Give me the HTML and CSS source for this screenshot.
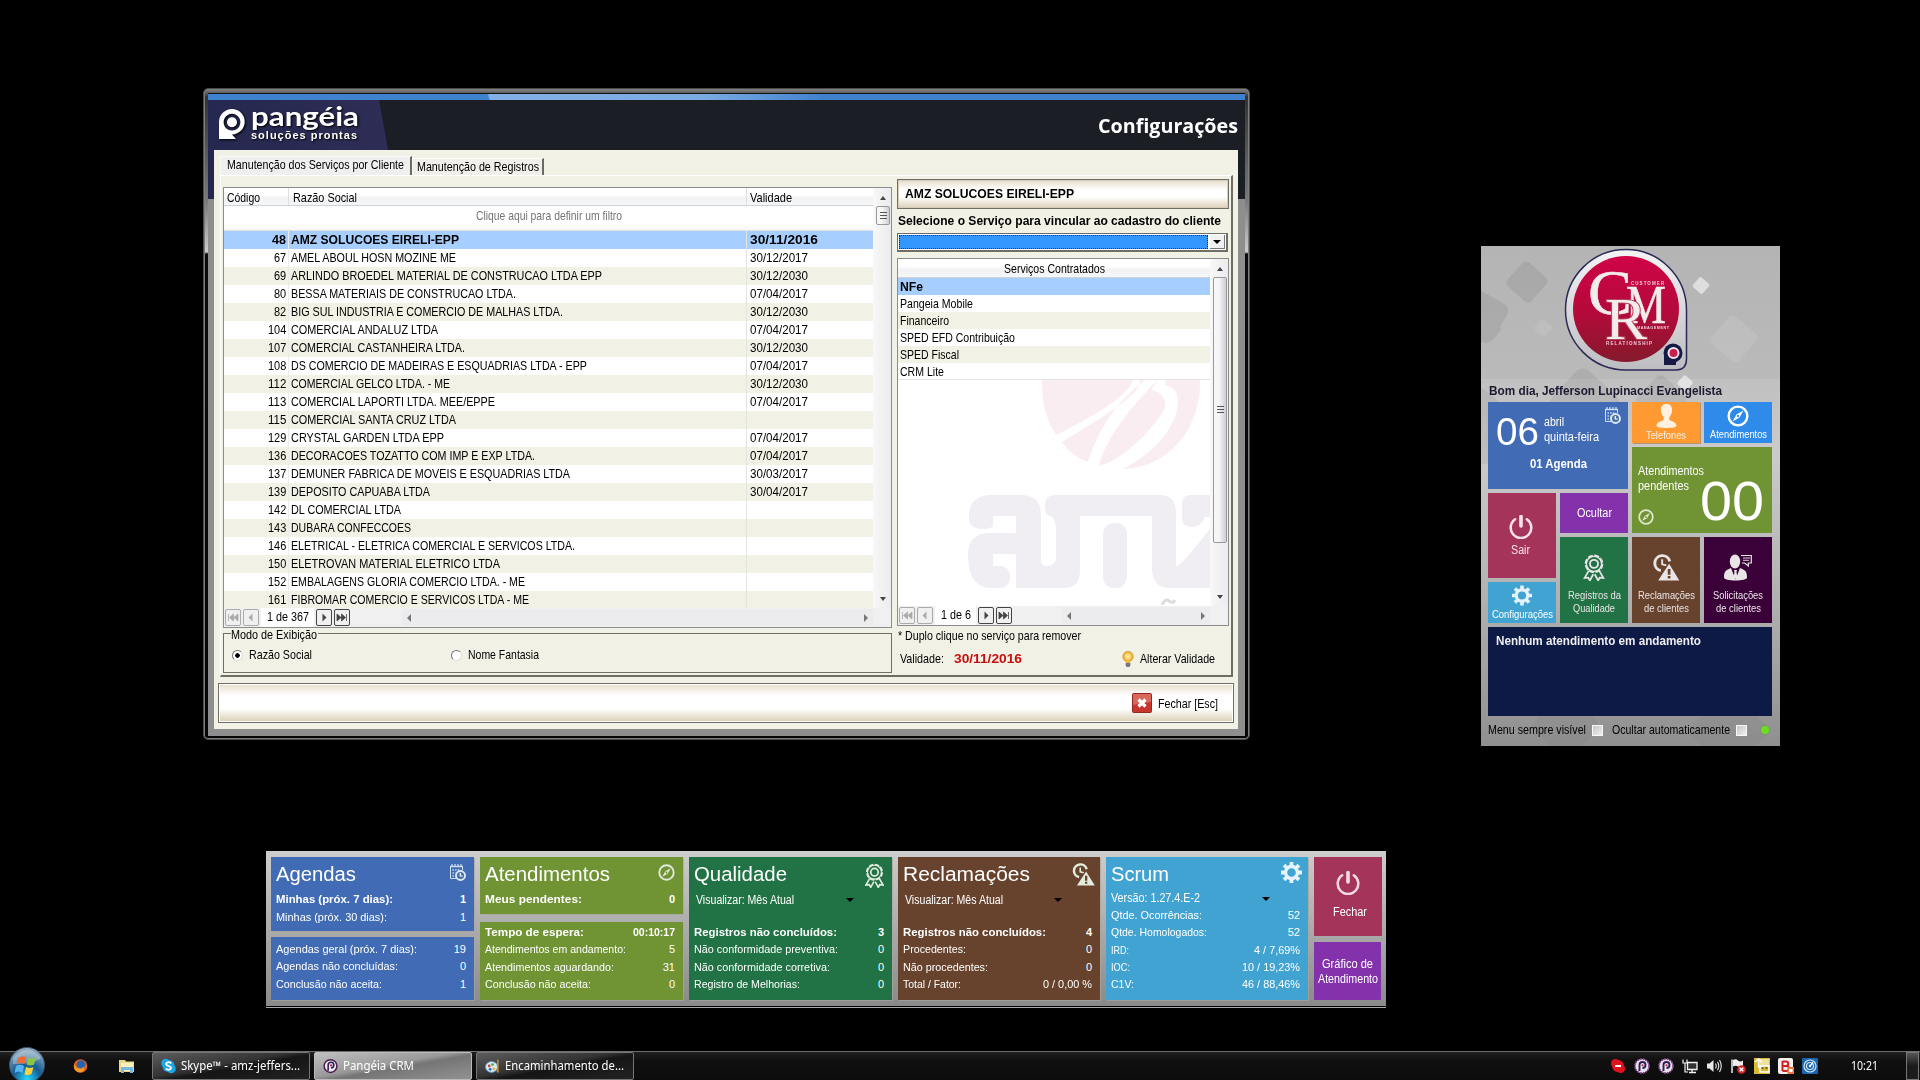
FILE: index.html
```html
<!DOCTYPE html>
<html lang="pt-BR">
<head>
<meta charset="utf-8">
<title>Pangéia CRM</title>
<link rel="stylesheet" href="styles.css">
</head>
<body>
<svg class="defs" aria-hidden="true">
  <defs>
    <symbol id="i-calendar" viewBox="0 0 17 17">
      <path d="M1 2.500h13" stroke="#cfe0f2" stroke-width="1.400"/><path d="M3 0v3M6 0v3M9 0v3M12 0v3" stroke="#cfe0f2" stroke-width="1.2"/>
      <path d="M1.500 3v11.500H7M13.500 3v3" fill="none" stroke="#cfe0f2"/>
      <path d="M3.500 6h8M3.500 9h3M3.500 12h3" stroke="#cfe0f2" stroke-width="1.500" stroke-dasharray="1.400 1.200"/>
      <circle cx="11.500" cy="11.500" r="4.500" fill="#4a6fa0" stroke="#dceaf8" stroke-width="1.900"/><path d="M11.300 9v3h2.400" fill="none" stroke="#fff" stroke-width="1.200"/>
    </symbol>
    <symbol id="i-compass" viewBox="0 0 24 24">
      <circle cx="12" cy="12" r="10.2" fill="none" stroke="currentColor" stroke-width="2.6"/>
      <path fill="currentColor" fill-rule="evenodd" d="M18 6l-4.3 7.7L6 18l4.3-7.7zM12 10.700a1.300 1.300 0 1 0 .01 0z"/>
    </symbol>
    <symbol id="i-power" viewBox="0 0 24 24">
      <path d="M6.200 4.200a10.300 10.300 0 1 0 11.600 0" fill="none" stroke="currentColor" stroke-width="2.500" stroke-linecap="round"/>
      <path d="M12 1.500v9.500" stroke="currentColor" stroke-width="3.600" stroke-linecap="round"/>
    </symbol>
    <symbol id="i-gear" viewBox="0 0 20 20">
      <path fill="none" stroke="currentColor" stroke-width="3.600" d="M10 0v4M10 16v4M0 10h4M16 10h4M2.900 2.900l2.900 2.900M14.200 14.200l2.900 2.900M17.100 2.900l-2.900 2.900M5.800 14.200l-2.900 2.900"/>
      <circle cx="10" cy="10" r="5.700" fill="none" stroke="currentColor" stroke-width="3.200"/>
    </symbol>
    <symbol id="i-ribbon" viewBox="0 0 20 26">
      <path d="M5 16l-4 7 3.500-.3L6 25.500l3.300-6M15 16l4 7-3.500-.3-1.500 2.800-3.300-6" fill="none" stroke="currentColor" stroke-width="1.700"/>
      <circle cx="10" cy="9.500" r="8" fill="none" stroke="currentColor" stroke-width="2" stroke-dasharray="4.800 1.480"/>
      <circle cx="10" cy="9.500" r="7.300" fill="none" stroke="currentColor" stroke-width="1.200"/>
      <circle cx="10" cy="9.500" r="3.900" fill="none" stroke="currentColor" stroke-width="1.800"/>
    </symbol>
    <symbol id="i-alert" viewBox="0 0 26 26">
      <path d="M8 16a7.300 7.300 0 1 1 8.600-9" fill="none" stroke="currentColor" stroke-width="2.800"/>
      <path d="M9.300 5v5l4 1" fill="none" stroke="currentColor" stroke-width="1.800"/>
      <path fill="currentColor" fill-rule="evenodd" d="M16 9.500L25.800 25.500H5.500zM14.700 14.500v5.500h2.600v-5.500zm0 6.700v2.300h2.600v-2.300z"/>
    </symbol>
    <symbol id="i-person" viewBox="0 0 20 24">
      <path fill="currentColor" d="M10 0c4 0 5.600 2.600 5.600 6 0 3-1.300 5.500-2.800 7v2.300c0 2 7.200 2 7.200 6.500 0 1.500-4 2.200-10 2.200S0 23.300 0 21.800c0-4.500 7.200-4.500 7.200-6.500V13c-1.500-1.500-2.800-4-2.800-7 0-3.400 1.600-6 5.600-6z"/>
    </symbol>
    <symbol id="i-talk" viewBox="0 0 28 27">
      <ellipse cx="11" cy="7.500" rx="5.200" ry="7" fill="currentColor"/>
      <path fill="currentColor" d="M7 14l4.500 11.500L16 14c5 2 7 3 7 9.500 0 2-5 3-11.500 3S0 25.500 0 23.500C0 17 2 16 7 14zM10 16h3l-.5 2 .7 4-1.700 3-1.700-3 .7-4z"/>
      <path d="M17 1.500h10.300v7.500h-3v3l-3.600-3H18" fill="none" stroke="currentColor" stroke-width="1.200"/><path d="M19 4h7M19 6.300h6" stroke="currentColor" stroke-width=".9"/>
    </symbol>
    <symbol id="i-first" viewBox="0 0 16 17"><rect x=".5" y=".5" width="15" height="16" rx="1.500" fill="none" stroke="currentColor"/><path d="M3.500 5v7M8.500 5v7L4.500 8.500zM13 5v7L9 8.500z" fill="currentColor" stroke="currentColor" stroke-width=".8"/></symbol>
    <symbol id="i-prev" viewBox="0 0 16 17"><rect x=".5" y=".5" width="15" height="16" rx="1.500" fill="none" stroke="currentColor"/><path d="M9.500 4.500v8l-4-4z" fill="currentColor"/></symbol>
    <symbol id="i-pang" viewBox="0 0 26 32"><path fill="currentColor" fill-rule="evenodd" d="M13 0a12.700 12.700 0 0 1 12.700 12.700C25.700 19.500 20.500 25 13 25.500L17 30H0V13A13 13 0 0 1 13 0zM13 4.800a8.400 8.400 0 1 0 .01 0z"/><circle cx="13" cy="13.200" r="5" fill="currentColor"/></symbol>
    <linearGradient id="g-red" x1="0" y1="0" x2="0" y2="1"><stop offset="0" stop-color="#cf0347"/><stop offset=".55" stop-color="#b30a3a"/><stop offset="1" stop-color="#841a2c"/></linearGradient>
    <linearGradient id="g-silver" x1="0" y1="0" x2="0" y2="1"><stop offset="0" stop-color="#f4f4f6"/><stop offset="1" stop-color="#bdbdc1"/></linearGradient>
    <radialGradient id="g-orb" cx=".5" cy=".9" r=".9"><stop offset="0" stop-color="#25d6ff"/><stop offset=".45" stop-color="#135b92"/><stop offset="1" stop-color="#9fb4c5"/></radialGradient>
    <radialGradient id="g-bulb"><stop offset="0" stop-color="#fff6b0"/><stop offset="1" stop-color="#efa921"/></radialGradient>
  </defs>
</svg>

<main class="desktop">

  <section class="win">
    <div class="win-strip"></div>
    <header class="win-head">
      <div class="brand">
        <svg class="brand-mark"><use href="#i-pang"/></svg>
        <div class="brand-text"><span class="brand-name" data-w="108">pangéia</span><span class="brand-sub" data-w="107">soluções prontas</span></div>
      </div>
      <h1 data-w="140">Configurações</h1>
    </header>
    <div class="win-body">
      <div class="tabs">
        <div class="tab on"><span data-w="177">Manutenção dos Serviços por Cliente</span></div>
        <div class="tab"><span data-w="122">Manutenção de Registros</span></div>
      </div>
      <div class="page">
        <div class="left">
          <div class="grid">
            <div class="grid-main">
              <div class="grid-data">
                <div class="ghead"><span class="c1"><span data-w="33">Código</span></span><span class="c2"><span data-w="64">Razão Social</span></span><span class="c3"><span data-w="42">Validade</span></span></div>
                <div class="gfilter"><span data-w="146">Clique aqui para definir um filtro</span></div>
                <div class="grows" id="clients"></div>
              </div>
              <div class="vbar"><i class="up"></i><b class="thumb t1"></b><i class="down"></i></div>
            </div>
            <div class="nav">
              <svg class="off"><use href="#i-first"/></svg><svg class="off"><use href="#i-prev"/></svg>
              <span class="count c367"><span data-w="42">1 de 367</span></span>
              <svg class="flip"><use href="#i-prev"/></svg><svg class="flip"><use href="#i-first"/></svg>
              <div class="hbar h1"><i class="lf"></i><i class="rt"></i></div>
            </div>
          </div>
          <div class="group">
            <span class="legend"><span data-w="86">Modo de Exibição</span></span>
            <div class="radios"><label><i class="radio on"></i><span data-w="63">Razão Social</span></label><label><i class="radio"></i><span data-w="71">Nome Fantasia</span></label></div>
          </div>
        </div>
        <div class="right">
          <div class="cname"><span data-w="169">AMZ SOLUCOES EIRELI-EPP</span></div>
          <div class="clabel"><span data-w="323">Selecione o Serviço para vincular ao cadastro do cliente</span></div>
          <div class="combo"><div class="sel"></div><div class="drop"><i></i></div></div>
          <div class="grid services">
            <div class="grid-main">
              <div class="grid-data">
                <div class="shead"><span data-w="101">Serviços Contratados</span></div>
                <div class="srow sel"><span data-w="23">NFe</span></div>
                <div class="srow"><span data-w="73">Pangeia Mobile</span></div>
                <div class="srow odd"><span data-w="49">Financeiro</span></div>
                <div class="srow"><span data-w="115">SPED EFD Contribuição</span></div>
                <div class="srow odd"><span data-w="59">SPED Fiscal</span></div>
                <div class="srow last"><span data-w="44">CRM Lite</span></div>
                <svg class="mark" viewBox="0 0 313 225">
                  <g fill="#f9edf1">
                    <path d="M144 0H235C230 16 196 36 158 55C148 40 143 20 144 0z"/>
                    <path d="M242 0C244 14 206 36 164 62C171 72 181 79 190 82C198 56 213 26 247 0z"/>
                    <path d="M260 0C238 20 206 60 201 86C228 80 262 40 267 28C269 18 262 11 253 10z"/>
                    <path d="M268 0H302C303 48 272 87 225 89C258 72 279 46 280 22C280 12 276 7 267 5z"/>
                  </g>
                  <g fill="#f0eef2">
                    <path d="M91 115H123Q143 115 143 135V180Q143 186 149 186T158 180V150Q158 136 149 135Q147 134 147 125Q147 115 157 115H262Q278 115 278 133V186Q284 186 313 147V208H272Q254 208 254 188V136H182V190Q182 208 166 208H118V174H95V186H103Q112 187 112 197T103 208H93Q70 208 70 174Q70 153 92 153H118V136H95V146Q93 149 86 149Q71 149 71 139Q70 116 91 115z"/>
                    <rect x="205" y="143" width="24" height="65" rx="11"/>
                    <path d="M313 115H291Q284 116 284 124V140Q285 147 294 147T307 137H313z"/>
                    <path d="M264 225q3-7 7-4t6-1" stroke="#dedbe0" stroke-width="3" fill="none"/>
                  </g>
                </svg>
              </div>
              <div class="vbar"><i class="up"></i><b class="thumb t2"></b><i class="down"></i></div>
            </div>
            <div class="nav">
              <svg class="off"><use href="#i-first"/></svg><svg class="off"><use href="#i-prev"/></svg>
              <span class="count"><span data-w="30">1 de 6</span></span>
              <svg class="flip"><use href="#i-prev"/></svg><svg class="flip"><use href="#i-first"/></svg>
              <div class="hbar h2"><i class="lf"></i><i class="rt"></i></div>
            </div>
          </div>
          <div class="note"><span data-w="183">* Duplo clique no serviço para remover</span></div>
          <div class="valid">
            <span data-w="44">Validade:</span><strong data-w="68">30/11/2016</strong>
            <svg class="bulb" viewBox="0 0 12 17"><circle cx="6" cy="5.500" r="5.200" fill="url(#g-bulb)" stroke="#c58a2b" stroke-width=".6"/><path d="M3.500 9.500h5l-.6 2.500H4.100z" fill="#f2b536"/><path d="M3.700 12h4.600v2.500L7.300 16H4.700l-1-1.500z" fill="#73777e"/></svg>
            <span data-w="75">Alterar Validade</span>
          </div>
        </div>
      </div>
      <footer class="bar">
        <svg class="xbtn" viewBox="0 0 20 20"><rect x=".5" y=".5" width="19" height="19" rx="1" fill="#c8372f" stroke="#8d2a22"/><path d="M1 1h18v8Q10 10 1 12z" fill="#df7c6f" opacity=".7"/><path d="M6.500 6.500l7 7M13.500 6.500l-7 7" stroke="#fff" stroke-width="3.200"/></svg>
        <span data-w="60">Fechar [Esc]</span>
      </footer>
    </div>
  </section>

  <section class="crm">
    <svg class="crm-bg" viewBox="0 0 299 500">
      <g fill="#000" opacity=".07">
        <rect x="-22" y="48" width="44" height="44" rx="8" transform="rotate(30 0 70)"/><rect x="30" y="20" width="32" height="32" rx="5" transform="rotate(42 46 36)"/>
        <rect x="5" y="77" width="13" height="13" rx="2" transform="rotate(40 11 84)"/><rect x="75" y="130" width="56" height="56" rx="10" transform="rotate(42 103 158)"/>
        <rect x="160" y="135" width="40" height="40" rx="7" transform="rotate(45 180 155)"/><rect x="-30" y="150" width="60" height="60" rx="10" transform="rotate(40 0 180)"/>
      </g>
      <g fill="#000" opacity=".03"><rect x="218" y="455" width="60" height="60" rx="8" transform="rotate(45 248 485)"/><rect x="60" y="455" width="50" height="50" rx="8" transform="rotate(45 85 480)"/></g>
      <g fill="#fff" opacity=".09"><rect x="235" y="75" width="36" height="36" rx="5" transform="rotate(40 253 93)"/><rect x="55" y="75" width="14" height="14" rx="3" transform="rotate(40 62 82)"/><rect x="0" y="133" width="299" height="367"/></g>
      <g fill="#fff" opacity=".55"><rect x="213.500" y="33" width="13" height="13" rx="2" transform="rotate(42 220 39.500)"/><rect x="198" y="131" width="12" height="12" rx="2" transform="rotate(42 204 137)"/></g>
      <path d="M145 3.500A60.500 60.500 0 0 1 205.500 64V113Q205.500 124 195 124H145A60.500 60.250 0 0 1 145 3.500z" fill="url(#g-silver)" stroke="#2b2a56" stroke-width="1.500"/>
      <circle cx="145" cy="63" r="53" fill="url(#g-red)"/>
      <g fill="#f3ecec" font-family="Liberation Serif, serif" stroke="#f3ecec" stroke-width=".5">
        <text x="107" y="68" font-size="64" textLength="44" lengthAdjust="spacingAndGlyphs">C</text>
        <text x="145" y="77" font-size="54" textLength="40" lengthAdjust="spacingAndGlyphs">M</text>
        <text x="124" y="93" font-size="60" textLength="42" lengthAdjust="spacingAndGlyphs" stroke="#b9465c" stroke-width="2" paint-order="stroke">R</text>
      </g>
      <g fill="#f1cdd6" font-family="Liberation Sans, sans-serif" font-weight="bold"><text x="150" y="38.500" font-size="4.500" textLength="33">CUSTOMER</text><text x="156" y="83" font-size="3.800" textLength="32">MANAGEMENT</text><text x="125" y="99" font-size="4.500" textLength="46">RELATIONSHIP</text></g>
      <circle cx="192" cy="107" r="9.500" fill="#161a44"/><path d="M183 107v12h12v-4z" fill="#161a44"/><circle cx="192.500" cy="107" r="5" fill="#c9204f" stroke="#efe9ee" stroke-width="2"/>
    </svg>
    <div class="hello"><span data-w="233">Bom dia, Jefferson Lupinacci Evangelista</span></div>
    <div class="tiles">
      <div class="tile agenda"><div class="day"><span class="num" data-w="43">06</span><div class="month"><span data-w="20">abril</span><span data-w="55">quinta-feira</span></div><svg class="cal"><use href="#i-calendar"/></svg></div><strong><span data-w="57">01 Agenda</span></strong></div>
      <div class="tile tel"><svg><use href="#i-person"/></svg><span data-w="40">Telefones</span></div>
      <div class="tile ate"><svg><use href="#i-compass"/></svg><span data-w="57">Atendimentos</span></div>
      <div class="tile pend"><div class="ptext"><span data-w="66">Atendimentos</span><span data-w="51">pendentes</span><svg><use href="#i-compass"/></svg></div><span class="zero" data-w="64">00</span></div>
      <div class="tile sair"><svg><use href="#i-power"/></svg><span data-w="19">Sair</span></div>
      <div class="tile ocul"><span data-w="35">Ocultar</span></div>
      <div class="tile reg tall"><svg><use href="#i-ribbon"/></svg><span data-w="53">Registros da</span><span data-w="42">Qualidade</span></div>
      <div class="tile rec tall"><svg><use href="#i-alert"/></svg><span data-w="57">Reclamações</span><span data-w="45">de clientes</span></div>
      <div class="tile sol tall"><svg><use href="#i-talk"/></svg><span data-w="50">Solicitações</span><span data-w="45">de clientes</span></div>
      <div class="tile conf"><svg><use href="#i-gear"/></svg><span data-w="61">Configurações</span></div>
    </div>
    <div class="status"><span data-w="205">Nenhum atendimento em andamento</span></div>
    <div class="opts"><span data-w="98">Menu sempre visível</span><i class="chk"></i><span class="auto" data-w="118">Ocultar automaticamente</span><i class="chk"></i><i class="led"></i></div>
  </section>

  <section class="dash">
    <div class="dcol">
      <div class="card blue c74"><div class="dt"><span data-w="80">Agendas</span><svg class="cal"><use href="#i-calendar"/></svg></div>
        <p class="b"><span data-w="117">Minhas (próx. 7 dias):</span><span>1</span></p><p><span data-w="111">Minhas (próx. 30 dias):</span><span>1</span></p></div>
      <div class="card blue low c63"><p><span data-w="141">Agendas geral (próx. 7 dias):</span><span>19</span></p><p><span data-w="122">Agendas não concluídas:</span><span>0</span></p><p><span data-w="106">Conclusão não aceita:</span><span>1</span></p></div>
    </div>
    <div class="dcol">
      <div class="card green c57"><div class="dt"><span data-w="125">Atendimentos</span><svg class="cmp"><use href="#i-compass"/></svg></div><p class="b"><span data-w="97">Meus pendentes:</span><span>0</span></p></div>
      <div class="card green low2 c78"><p class="b"><span data-w="99">Tempo de espera:</span><span data-w="42">00:10:17</span></p><p><span data-w="141">Atendimentos em andamento:</span><span>5</span></p><p><span data-w="129">Atendimentos aguardando:</span><span>31</span></p><p><span data-w="106">Conclusão não aceita:</span><span>0</span></p></div>
    </div>
    <div class="dcol">
      <div class="card dgreen full"><div class="dt"><span data-w="93">Qualidade</span><svg class="rib"><use href="#i-ribbon"/></svg></div><div class="pick"><span data-w="98">Visualizar: Mês Atual</span><i></i></div>
        <p class="b"><span data-w="143">Registros não concluídos:</span><span>3</span></p><p><span data-w="144">Não conformidade preventiva:</span><span>0</span></p><p><span data-w="136">Não conformidade corretiva:</span><span>0</span></p><p><span data-w="106">Registro de Melhorias:</span><span>0</span></p></div>
    </div>
    <div class="dcol">
      <div class="card brown full"><div class="dt"><span data-w="127">Reclamações</span><svg class="alr"><use href="#i-alert"/></svg></div><div class="pick"><span data-w="98">Visualizar: Mês Atual</span><i></i></div>
        <p class="b"><span data-w="143">Registros não concluídos:</span><span>4</span></p><p><span data-w="63">Procedentes:</span><span>0</span></p><p><span data-w="85">Não procedentes:</span><span>0</span></p><p><span data-w="58">Total / Fator:</span><span data-w="49">0 / 0,00 %</span></p></div>
    </div>
    <div class="dcol">
      <div class="card sky full"><div class="dt"><span data-w="58">Scrum</span><svg class="ger"><use href="#i-gear"/></svg></div><div class="pick"><span data-w="89">Versão: 1.27.4.E-2</span><i></i></div>
        <p><span data-w="91">Qtde. Ocorrências:</span><span>52</span></p><p><span data-w="96">Qtde. Homologados:</span><span>52</span></p><p><span data-w="18">IRD:</span><span data-w="46">4 / 7,69%</span></p><p><span data-w="19">IOC:</span><span data-w="58">10 / 19,23%</span></p><p><span data-w="23">C1V:</span><span data-w="58">46 / 88,46%</span></p></div>
    </div>
    <div class="dcol narrow">
      <div class="btn close"><svg><use href="#i-power"/></svg><span data-w="34">Fechar</span></div>
      <div class="btn chart"><span data-w="51">Gráfico de</span><span data-w="60">Atendimento</span></div>
    </div>
  </section>
</main>

<nav class="taskbar">
  <svg class="orb" viewBox="0 0 38 38"><circle cx="19" cy="19" r="17.500" fill="url(#g-orb)" stroke="#3b5266"/><path d="M5 12Q19-4 33 12Q26 18 5 18z" fill="#fff" opacity=".3"/><path d="M10 12q4-3 8-1l-1.500 7q-4-2-8 0z" fill="#ec6b35"/><path d="M20 12q4 2 8-1l-2 7.500q-3 2-7.500 0z" fill="#8dc63f"/><path d="M8 20q4-2.500 8 0l-1.500 7q-4-3-8 0z" fill="#58b4ee"/><path d="M18 21q4 2 7.500 0l-2 7q-3 2-7 .5z" fill="#fbcf3a"/></svg>
  <svg class="q1" viewBox="0 0 16 16"><circle cx="8" cy="8" r="7.300" fill="#e8641b"/><circle cx="8.500" cy="6.500" r="4.700" fill="#2a63ad"/><path d="M1 5q1 5 6 5.500 4 .5 4-2.500 2 4-1 6-6 2-8.500-3z" fill="#f79a24"/></svg>
  <svg class="q2" viewBox="0 0 17 16"><path d="M1 2h6l1 1.500h8V14H1z" fill="#ead98c"/><path d="M3 5h12v8H3z" fill="#f9f0b8"/><path d="M3 9h12v6h-3v-3H6v3H3z" fill="#74b9e3"/></svg>
  <div class="task t-first"><svg viewBox="0 0 16 16"><circle cx="5" cy="5" r="4.700" fill="#1ba8ea"/><circle cx="11" cy="11" r="4.700" fill="#1ba8ea"/><circle cx="8" cy="8" r="6.500" fill="#1ba8ea"/><path d="M11 5Q8 3 6 4.800T8 8t2 3.200T5 11" fill="none" stroke="#fff" stroke-width="1.900"/></svg><span data-w="119">Skype™ - amz-jeffers...</span></div>
  <div class="task active"><svg viewBox="0 0 16 16"><circle cx="8" cy="8" r="6.800" fill="#f0e8f2" stroke="#4a1d50" stroke-width="1.600"/><path d="M5.500 13V7a3 3 0 1 1 3 3" fill="none" stroke="#2d1f55" stroke-width="1.700"/><circle cx="8.500" cy="7.200" r="1.200" fill="#c02045"/></svg><span data-w="71">Pangéia CRM</span></div>
  <div class="task"><svg viewBox="0 0 16 16"><ellipse cx="7" cy="9" rx="6.500" ry="5.800" fill="#d8ecf6" stroke="#5b97b8"/><circle cx="4.500" cy="8" r="1.500" fill="#d9452f"/><circle cx="8" cy="6.500" r="1.500" fill="#58a83c"/><circle cx="5.500" cy="11.500" r="1.500" fill="#2f66c8"/><circle cx="9.500" cy="11" r="1.500" fill="#e8b22a"/><path d="M13 1l1.500 0v14h-2z" fill="#d18a32"/></svg><span data-w="119">Encaminhamento de...</span></div>
  <div class="tray">
    <svg viewBox="0 0 16 16"><circle cx="5.500" cy="5.500" r="4.500" fill="#e0131f"/><circle cx="10.500" cy="10.500" r="4.500" fill="#e0131f"/><circle cx="8" cy="8" r="6" fill="#e0131f"/><path d="M5 8h6" stroke="#fff" stroke-width="2"/></svg>
    <svg viewBox="0 0 16 16"><circle cx="8" cy="8" r="7" fill="#e9e1ee" stroke="#8d4a94" stroke-width="1.800" stroke-dasharray="1.600 1.200"/><path d="M5.500 13V7a3 3 0 1 1 3 3" fill="none" stroke="#2d1f55" stroke-width="1.900"/><circle cx="8.500" cy="7.200" r="1" fill="#c02045"/></svg>
    <svg viewBox="0 0 16 16"><circle cx="8" cy="8" r="7" fill="#e9e1ee" stroke="#8d4a94" stroke-width="1.800" stroke-dasharray="1.600 1.200"/><path d="M5.500 13V7a3 3 0 1 1 3 3" fill="none" stroke="#2d1f55" stroke-width="1.900"/><circle cx="8.500" cy="7.200" r="1" fill="#c02045"/></svg>
    <svg viewBox="0 0 16 16"><path d="M5.500 4.500h9.500v7H5.500zM10 12v2.500M7 14.500h7" fill="#333" stroke="#f4f4f4" stroke-width="1.300"/><path d="M1 1.500v3.500h4V1.500M3 5v9h3" fill="none" stroke="#f4f4f4" stroke-width="1.200"/></svg>
    <svg viewBox="0 0 16 16"><path d="M1 5.500h2.500L7.500 2v12l-4-3.500H1z" fill="#e8e8e8"/><path d="M9.500 5.500q1.500 2.500 0 5M11.500 3.800q2.500 4.200 0 8.400M13.500 2q3.500 6 0 12" fill="none" stroke="#e8e8e8" stroke-width="1.100"/></svg>
    <svg viewBox="0 0 16 16"><path d="M2 1.500V15" stroke="#eee" stroke-width="1.500"/><path d="M3 2q3-1.500 5 .5t5 0v6q-3 1.500-5 0t-5 0z" fill="#eee"/><circle cx="11.500" cy="11.500" r="4.300" fill="#d8252c"/><path d="M9.700 9.700l3.600 3.600M13.300 9.700l-3.600 3.600" stroke="#fff" stroke-width="1.400"/></svg>
    <svg viewBox="0 0 16 16"><path d="M0 0h16v16H0z" fill="#d9b936"/><path d="M5 1h10v7H5z" fill="#efe197"/><path d="M1 4l3.500-3L8 4M4.500 1v8h4M6 8h9v6H6z" fill="none" stroke="#fff" stroke-width="1.400"/><path d="M7.500 10h2M11.500 10h2" stroke="#5b4a13" stroke-width="1.500"/></svg>
    <svg viewBox="0 0 16 16"><rect width="15" height="16" rx="2" fill="#f5f1ef"/><path d="M4.500 3v10M4.500 3.500H8a2.200 2.200 0 0 1 0 4.500H4.500H8.500a2.500 2.500 0 0 1 0 5h-4" fill="none" stroke="#d21f26" stroke-width="2"/><path d="M9.500 9h6.500v7H9.500z" fill="#ec7b3a"/><path d="M11 11h3.500v3H11z" fill="#fff"/></svg>
    <svg viewBox="0 0 16 16"><rect width="16" height="16" rx="1" fill="#1b64ae"/><circle cx="8" cy="8" r="6" fill="none" stroke="#cfe6f7" stroke-width="1.200"/><circle cx="8" cy="8" r="3.500" fill="none" stroke="#cfe6f7" stroke-width="1.200"/><circle cx="8" cy="8" r="1.200" fill="#fff"/><path d="M8 8l3-3.500" stroke="#fff" stroke-width="1.300"/></svg>
  </div>
  <span class="clock" data-w="27">10:21</span>
  <div class="peek"></div>
</nav>
<script src="app.js"></script>
</body>
</html>
```
FILE: styles.css
```css
* { box-sizing: border-box; }
body { margin: 0; width: 1920px; height: 1080px; overflow: hidden; background: #000; display: flex; flex-direction: column; font: 13px/16px "Liberation Sans", sans-serif; color: #000; }
[data-w] { display: inline-block; white-space: pre; text-align: left; transform-origin: 0 50%; flex: none; }
svg { display: block; flex: none; }
i { display: block; }
p, h1 { margin: 0; }
.defs { position: absolute; width: 0; height: 0; }
.desktop { position: relative; height: 1051px; flex: none; }

/* Settings window */
.win { position: absolute; left: 203px; top: 88px; width: 1047px; height: 652px; padding: 4px; border: 1px solid #4c4c4c; border-radius: 5px; background: linear-gradient(#888 0, #333 8px, #484848 40px, #777 110px, #ccc 163px, #0b0b0b 165px, #050505 100%); box-shadow: inset 0 0 0 1px #7c7c7c; display: flex; flex-direction: column; }
.win-strip { height: 7px; border-top: 1px solid #111; background: linear-gradient(75deg, #3f83cf 0 271px, #82b0e6 273px, #7aabe3 480px, #3f80cc 600px); flex: none; }
.win-head { height: 50px; flex: none; background: #1c1e26; display: flex; justify-content: space-between; }
.brand { width: 180px; height: 50px; background: linear-gradient(90deg, #252850, #2e2d55); clip-path: polygon(0 0, 171px 0, 180px 50px, 0 50px); padding: 9px 0 0 11px; display: flex; gap: 6px; color: #fff; }
.brand-mark { width: 26px; height: 32px; filter: drop-shadow(1px 1px 1px #000); }
.brand-text { display: flex; flex-direction: column; text-shadow: 1px 1px 2px #000; }
.brand-name { font: 700 27px/20px Lato, sans-serif; margin-top: -3px; }
.brand-sub { font: 700 11px/12px "Liberation Sans", sans-serif; letter-spacing: 1px; margin-top: 3px; }
.win-head h1 { font: 700 20px/24px "Open Sans", sans-serif; color: #fff; margin: 14px 7px 0 0; }
.win-body { flex: 1; border: solid transparent; border-width: 0 7px 7px 6px; background: linear-gradient(#f1f1e6, #f1f1e6) padding-box, linear-gradient(90deg, #25274f 50%, #1c1e26 50%) border-box 0 0 / 100% 49px no-repeat, #8e8e8e; padding: 6px 4px; display: flex; flex-direction: column; background-clip: padding-box, border-box, border-box; background-origin: padding-box, border-box, border-box; }
.tabs { display: flex; align-items: flex-end; padding-left: 2px; height: 19px; }
.tab { height: 17px; width: 132px; padding: 0 0 0 4px; border: solid; border-width: 1px 2px 0 1px; border-color: #fbfbf7 #6a6a66 #fff #f8f8f3; background: #f0efe9; }
.tab.on { height: 19px; width: 192px; padding: 0 0 0 6px; background: #f0efef; }
.page { margin-left: 2px; width: 1013px; height: 502px; border: solid; border-width: 1px 2px 2px 1px; border-color: #fff #6d6d66 #6d6d66 #fff; padding-left: 2px; display: flex; gap: 5px; }
.left { width: 669px; padding-top: 11px; flex: none; }
.right { width: 332px; padding-top: 3px; flex: none; }
.grid { height: 441px; border: 1px solid #8a8c8e; background: #fff; display: flex; flex-direction: column; overflow: hidden; }
.grid-main { flex: 1; min-height: 0; display: flex; }
.grid-data { flex: 1; min-width: 0; overflow: hidden; }
.ghead { height: 18px; display: flex; line-height: 20px; background: linear-gradient(#fff 40%, #f1f2f4 60%, #f6f7f8); border-bottom: 1px solid #d0d2d4; }
.c1 { width: 65px; padding-left: 3px; border-right: 1px solid #e0e0e2; flex: none; }
.c2 { width: 458px; padding-left: 4px; border-right: 1px solid #e0e0e2; flex: none; }
.c3 { padding-left: 3px; flex: 1; }
.gfilter { height: 25px; line-height: 19px; text-align: center; color: #747474; border-bottom: 1px solid #e2e2e2; background: linear-gradient(#fff 70%, #f7f7f7); }
.grow { display: flex; height: 18px; line-height: 18px; }
.grow:nth-child(odd) { background: #f1f1e5; }
.grow:nth-child(even) { background: #fff; }
.grow .c1 { text-align: right; padding-right: 2px; border-color: #ececea; }
.grow .c2 { padding-left: 2px; border-color: #e4e4e4; }
.grow.sel, .srow.sel { background: #a6cfff; font-weight: bold; }
.vbar { width: 18px; background: linear-gradient(90deg, #f6f6f6, #ececee); border-left: 2px solid #f8f8f8; display: flex; flex-direction: column; align-items: center; flex: none; }
.up { width: 0; border: 3.500px solid transparent; border-top: 0; border-bottom: 4px solid #444; margin: 8px 0 6px; }
.down { width: 0; border: 3.500px solid transparent; border-bottom: 0; border-top: 4px solid #444; margin: auto 0 7px; }
.thumb { width: 14px; border: 1px solid #989898; border-radius: 2px; background: repeating-linear-gradient(#555 0 1px, transparent 1px 3px) 50% 50% / 7px 8px no-repeat, linear-gradient(90deg, #f7f7f7 40%, #cfcfd2); }
.t1 { height: 19px; }
.t2 { height: 266px; }
.nav { height: 19px; flex: none; background: #f0f0f0; display: flex; align-items: center; padding-left: 1px; gap: 2px; }
.nav svg { width: 16px; height: 17px; color: #444; }
.nav svg.off { color: #aaa; }
.nav .flip { transform: scaleX(-1); }
.count { background: #fff; width: 53px; height: 19px; line-height: 18px; padding-left: 6px; }
.services .count { width: 41px; }
.hbar { margin-left: auto; height: 17px; display: flex; align-items: center; justify-content: space-between; background: #ececee; padding: 0 5px; margin-right: 18px; }
.h1 { width: 471px; }
.h2 { width: 148px; }
.lf { border: 4px solid transparent; border-left: 0; border-right-color: #777; }
.rt { border: 4px solid transparent; border-right: 0; border-left-color: #777; }
.group { margin-top: 5px; height: 40px; border: 1px solid #6f6f68; padding: 0 8px; }
.legend { display: block; width: 87px; height: 12px; line-height: 12px; margin: -5px 0 0 -1px; background: #f1f1e6; }
.radios { display: flex; margin-top: 6px; }
.radios label { width: 219px; display: flex; align-items: center; gap: 6px; }
.radio { width: 11px; height: 11px; border-radius: 50%; background: #fff; border: 1px solid; border-color: #777 #ddd #ddd #777; }
.radio.on { background: radial-gradient(circle, #000 2px, #fff 2.500px); }
.cname { height: 30px; border: 1px solid #70706a; box-shadow: inset 0 0 0 1px #d8cbb8; background: linear-gradient(#e6dccb, #fff 35%, #fff 60%, #dcd0b8); font-weight: bold; padding-left: 7px; line-height: 28px; }
.clabel { height: 24px; line-height: 24px; font-weight: bold; padding-left: 1px; }
.combo { height: 19px; width: 331px; border: 1px solid #6f6f68; border-width: 1px 2px 2px 1px; background: #fff; padding: 1px; display: flex; gap: 2px; }
.combo .sel { flex: 1; background: #3397ff; border: 1px dotted #04284d; }
.drop { width: 15px; background: #f0f0f0; border-right: 1px solid #777; border-bottom: 1px solid #777; padding: 5px 0 0 3px; }
.drop i { width: 0; border: 4px solid transparent; border-top-color: #000; border-bottom: 0; }
.services { margin-top: 6px; height: 368px; }
.shead { height: 19px; line-height: 19px; text-align: center; background: linear-gradient(#fff 40%, #f1f2f4 60%, #f6f7f8); border-bottom: 1px solid #d0d2d4; }
.srow { height: 17px; line-height: 17px; padding-left: 2px; }
.srow.odd { background: #f1f1e5; }
.srow.last { border-bottom: 1px solid #e4e4e4; }
.mark { width: 313px; height: 225px; }
.note { height: 20px; line-height: 19px; padding-left: 1px; }
.valid { height: 26px; display: flex; align-items: center; padding-left: 3px; }
.valid strong { color: #c80f0f; margin-left: 10px; }
.bulb { width: 12px; height: 17px; margin: 0 6px 0 100px; }
.bar { margin-top: 6px; height: 40px; width: 1016px; border: 1px solid #6f6f68; box-shadow: inset 0 0 0 1px #fff; background: linear-gradient(#e6dccb, #fff 30%, #fff 65%, #dacdb2); display: flex; align-items: center; justify-content: flex-end; padding-right: 15px; gap: 6px; }
.xbtn { width: 20px; height: 20px; }
.bar span { padding-top: 1px; }

/* CRM menu */
.crm { position: absolute; left: 1481px; top: 246px; width: 299px; height: 500px; background: linear-gradient(#b4b4b4, #bababa 26%, #c6c6c6 42%, #aaa 70%, #858585); padding: 133px 7px 0; }
.crm-bg { position: absolute; left: 0; top: 0; width: 299px; height: 500px; }
.hello, .tiles, .status, .opts { position: relative; }
.hello { height: 23px; line-height: 24px; font-weight: bold; font-size: 12px; color: #1c1930; padding-left: 1px; }
.tiles { display: grid; grid-template-columns: repeat(4, 68px); grid-template-rows: 41px 42px 40px 41px 41px; gap: 4px; color: #fff; font-size: 11px; line-height: 15px; }
.tile { display: flex; flex-direction: column; align-items: center; }
.agenda { grid-area: 1 / 1 / 3 / 3; background: #416bb5; }
.tel { grid-area: 1 / 3; background: #ff9a33; color: #fff0df; padding-top: 2px; box-shadow: 1px 1px #b9936b; }
.ate { grid-area: 1 / 4; background: #2f8bea; padding-top: 3px; }
.pend { grid-area: 2 / 3 / 4 / 5; background: #709334; }
.sair { grid-area: 3 / 1 / 5 / 2; background: #a5345b; padding: 22px 3px 0 0; color: #fbe2ea; font-size: 12px; }
.ocul { grid-area: 3 / 2; background: #8432ac; justify-content: center; font-size: 12px; }
.reg { grid-area: 4 / 2 / 6 / 3; background: #217244; }
.rec { grid-area: 4 / 3 / 6 / 4; background: #67432d; }
.sol { grid-area: 4 / 4 / 6 / 5; background: #3a0038; }
.conf { grid-area: 5 / 1; background: #41a3d2; padding-top: 3px; }
.day { display: flex; align-self: stretch; padding: 5px 7px 0 8px; height: 55px; }
.num { font-size: 39px; line-height: 49px; }
.month { display: flex; flex-direction: column; padding: 8px 0 0 5px; font-size: 12px; flex: 1; }
.cal { width: 17px; height: 17px; }
.agenda strong { font-size: 12px; }
.tel svg { width: 21px; height: 24px; }
.ate svg { width: 22px; height: 22px; }
.pend { flex-direction: row; justify-content: space-between; padding: 8px 8px 0 6px; font-size: 12px; }
.ptext { display: flex; flex-direction: column; width: 66px; }
.ptext svg { width: 16px; height: 16px; margin-top: 15px; color: #dfe8cc; }
.zero { font-size: 56px; line-height: 56px; margin: 13px 0 0 -20px; }
.sair svg { width: 24px; height: 24px; margin-bottom: 4px; }
.tall { padding-top: 17px; line-height: 13px; color: #e9e4e6; }
.tall svg { width: 28px; height: 27px; margin-bottom: 8px; }
.conf svg { width: 20px; height: 21px; color: #e4f4fc; margin-bottom: 1px; }
.status { margin-top: 4px; width: 284px; height: 89px; background: #0d1a45; color: #eee; font-weight: bold; font-size: 12px; padding: 6px 8px; }
.opts { display: flex; align-items: center; height: 28px; }
.chk { width: 11px; height: 11px; border: 1px solid #f8f8f8; background: linear-gradient(135deg, #c8c8c8, #eee); margin-left: 6px; }
.auto { margin-left: 9px; }
.led { width: 8px; height: 8px; border-radius: 50%; background: #6edc23; margin-left: 14px; box-shadow: 0 0 2px #5a9a30; }

/* Dashboard strip */
.dash { position: absolute; left: 266px; top: 851px; width: 1120px; height: 155px; background: linear-gradient(#cdcdcd, #8a8a8a); box-shadow: 0 1px #000, 0 2px #aaa; padding: 6px 5px; display: flex; gap: 6px; color: #fff; font-size: 11px; line-height: 17.300px; }
.dcol { width: 203px; height: 143px; display: flex; flex-direction: column; justify-content: space-between; flex: none; }
.dcol:nth-child(4) { width: 202px; }
.dcol:nth-child(5) { width: 202px; }
.dcol.narrow { width: 68px; }
.card { box-shadow: 1px 1px rgba(170, 165, 155, .7); padding: 0 8px 0 5px; }
.c57 { height: 57px; }
.c63 { height: 63px; }
.c74 { height: 74px; }
.c78 { height: 78px; }
.card.full { height: 143px; }
.card p { display: flex; justify-content: space-between; height: 17.300px; }
.card .b { font-weight: bold; }
.blue { background: #416bb5; }
.green { background: #709334; }
.dgreen { background: #217244; }
.brown { background: #67432d; }
.sky { background: #41a3d2; }
.dt { height: 34px; display: flex; justify-content: space-between; font-size: 20px; line-height: 35px; }
.dt svg { margin-top: 7px; color: #e3ebdf; }
.cmp { width: 17px; height: 17px; }
.rib { width: 19px; height: 25px; }
.dt .rib, .dt .alr { margin-top: 6px; }
.alr { width: 23px; height: 23px; margin-right: -3px; }
.dt .ger { width: 21px; height: 21px; margin: 5px -2px 0 0; color: #e4f4fc; }
.c74 p + p { padding-top: .5px; }
.low { padding-top: 4px; }
.low2 { padding-top: 2px; }
.pick { height: 33px; display: flex; padding-left: 2px; font-size: 12px; line-height: 18px; }
.pick i { width: 0; height: 0; border: 4px solid transparent; border-top-color: #000; border-bottom: 0; margin: 7px 30px 0 auto; }
.sky .pick { height: 16px; padding-left: 0; line-height: 15px; }
.sky .pick i { margin-top: 6px; }
.btn { display: flex; flex-direction: column; align-items: center; font-size: 12px; line-height: 15px; }
.close { background: #a5345b; height: 79px; padding-top: 14px; }
.close svg { width: 24px; height: 24px; color: #f6d9e3; margin-bottom: 10px; }
.close span { margin-left: 3px; }
.chart { background: #8432ac; height: 58px; padding-top: 15px; width: 67px; }

/* Taskbar */
.taskbar { height: 29px; border-top: 1px solid #6e6e6e; background: linear-gradient(#202020, #101010 30%, #0c0c0c); display: flex; align-items: center; color: #fff; font: 12px/16px "Noto Sans", sans-serif; }
.orb { width: 38px; height: 38px; margin: -6px 0 -4px 8px; }
.q1 { width: 15px; height: 16px; margin-left: 27px; }
.q2 { width: 17px; height: 16px; margin-left: 30px; }
.task { width: 158px; height: 28px; margin-right: 4px; border: 1px solid #757575; border-radius: 2px; background: linear-gradient(170deg, #5d5d5d, #333 45%, #151515 55%, #222); display: flex; align-items: center; padding-left: 8px; gap: 5px; }
.task svg { width: 15px; height: 16px; }
.t-first { margin-left: 17px; }
.task.active { background: linear-gradient(170deg, #c0c0c0, #9a9a9a 45%, #757575 55%, #929292); border-color: #bbb; }
.tray { margin-left: auto; display: flex; gap: 8px; margin-right: 33px; }
.tray svg { width: 16px; height: 16px; }
.clock { margin-right: 28px; }
.peek { width: 13px; height: 28px; border: 1px solid #777; background: linear-gradient(#555, #1b1b1b 50%); margin-right: 1px; }
```
FILE: app.js
```js
// Client rows: code, company name, name width, expiry date.
const clients = [
  [48, 'AMZ SOLUCOES EIRELI-EPP', 168, '30/11/2016'],
  [67, 'AMEL ABOUL HOSN MOZINE ME', 165, '30/12/2017'],
  [69, 'ARLINDO BROEDEL MATERIAL DE CONSTRUCAO LTDA EPP', 311, '30/12/2030'],
  [80, 'BESSA MATERIAIS DE CONSTRUCAO LTDA.', 225, '07/04/2017'],
  [82, 'BIG SUL INDUSTRIA E COMERCIO DE MALHAS LTDA.', 272, '30/12/2030'],
  [104, 'COMERCIAL ANDALUZ LTDA', 147, '07/04/2017'],
  [107, 'COMERCIAL CASTANHEIRA LTDA.', 174, '30/12/2030'],
  [108, 'DS COMERCIO DE MADEIRAS E ESQUADRIAS LTDA - EPP', 296, '07/04/2017'],
  [112, 'COMERCIAL GELCO LTDA. - ME', 159, '30/12/2030'],
  [113, 'COMERCIAL LAPORTI LTDA. MEE/EPPE', 204, '07/04/2017'],
  [115, 'COMERCIAL SANTA CRUZ LTDA', 165, ''],
  [129, 'CRYSTAL GARDEN LTDA EPP', 153, '07/04/2017'],
  [136, 'DECORACOES TOZATTO COM IMP E EXP LTDA.', 244, '07/04/2017'],
  [137, 'DEMUNER FABRICA DE MOVEIS E ESQUADRIAS LTDA', 279, '30/03/2017'],
  [139, 'DEPOSITO CAPUABA LTDA', 139, '30/04/2017'],
  [142, 'DL COMERCIAL LTDA', 110, ''],
  [143, 'DUBARA CONFECCOES', 120, ''],
  [146, 'ELETRICAL - ELETRICA COMERCIAL E SERVICOS LTDA.', 284, ''],
  [150, 'ELETROVAN MATERIAL ELETRICO LTDA', 209, ''],
  [152, 'EMBALAGENS GLORIA COMERCIO LTDA. - ME', 234, ''],
  [161, 'FIBROMAR COMERCIO E SERVICOS LTDA - ME', 238, '']
];

document.getElementById('clients').innerHTML = clients.map(([code, name, w, date], i) => {
  const codeW = i === 0 ? 14 : String(code).length * 6.1;
  const expiry = date ? `<span data-w="${i === 0 ? 68 : 58}">${date}</span>` : '';
  return `<div class="grow${i === 0 ? ' sel' : ''}"><span class="c1"><span data-w="${codeW}">${code}</span></span>` +
    `<span class="c2"><span data-w="${w}">${name}</span></span><span class="c3">${expiry}</span></div>`;
}).join('');

// Condense each label to its set width.
document.querySelectorAll('[data-w]').forEach(el => {
  const w = parseFloat(el.dataset.w);
  const range = document.createRange();
  range.selectNodeContents(el);
  const natural = range.getBoundingClientRect().width;
  el.style.width = w + 'px';
  el.style.transform = `scaleX(${w / natural})`;
});
```
